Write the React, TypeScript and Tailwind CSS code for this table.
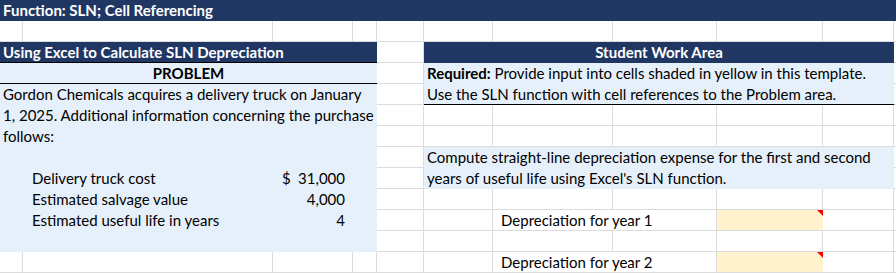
import React from "react";

const GRID = "#dcdcdc";

function BgGrid() {
  const cells: React.ReactNode[] = [];
  for (let r = 0; r < 13; r++) {
    for (let c = 0; c < 11; c++) {
      cells.push(<div key={`${r}-${c}`} className="border-r border-b border-[#dcdcdc] bg-white" />);
    }
  }
  return (
    <div className="[grid-area:1/1] grid grid-cols-[23px_250px_80px_24px_47px_69px_120px_104px_106px_71px_3px] grid-rows-[repeat(13,21px)]">
      {cells}
    </div>
  );
}

function RedMark() {
  return (
    <div className="absolute right-0 top-0 w-0 h-0 border-t-[6px] border-t-[#ff0000] border-l-[6px] border-l-transparent" />
  );
}

export default function App() {
  void GRID;
  return (
    <div className="w-[896px] h-[273px] overflow-hidden bg-white font-['Lato','Liberation_Sans',sans-serif] text-[15px] leading-[21px] text-black">
      <div className="grid">
        <BgGrid />
        <div className="[grid-area:1/1] grid grid-cols-[23px_250px_80px_24px_47px_69px_120px_104px_106px_71px_3px] grid-rows-[repeat(13,21px)]">
          {/* Row 1 title */}
          <div className="col-start-1 col-span-11 row-start-1 bg-[#203764] text-white font-bold px-[3px] whitespace-nowrap">
            Function: SLN; Cell Referencing
          </div>

          {/* Row 3 left header */}
          <div className="col-start-1 col-span-4 row-start-3 bg-[#203764] text-white font-bold px-[3px] border-b border-black whitespace-nowrap">
            Using Excel to Calculate SLN Depreciation
          </div>
          {/* Row 3 right header */}
          <div className="col-start-6 col-span-5 row-start-3 bg-[#203764] text-white font-bold text-center whitespace-nowrap">
            Student Work Area
          </div>

          {/* Left problem panel */}
          <div className="col-start-1 col-span-4 row-start-4 row-span-9 bg-[#e6f0fa] flex flex-col">
            <div className="h-[21px] font-bold text-center border-b border-black">PROBLEM</div>
            <div className="h-[63px] px-[3px]">
              Gordon Chemicals acquires a delivery truck on January 1, 2025. Additional information concerning the purchase follows:
            </div>
            <div className="h-[21px]" />
            <div className="grid grid-cols-[23px_250px_80px_24px] grid-rows-[repeat(3,21px)]">
              <div className="col-start-2 pl-[9px] whitespace-nowrap">Delivery truck cost</div>
              <div className="col-start-3 flex justify-between pl-[9px] pr-[8px]">
                <span>$</span>
                <span>31,000</span>
              </div>
              <div className="col-start-2 pl-[9px] whitespace-nowrap">Estimated salvage value</div>
              <div className="col-start-3 text-right pr-[8px]">4,000</div>
              <div className="col-start-2 pl-[9px] whitespace-nowrap">Estimated useful life in years</div>
              <div className="col-start-3 text-right pr-[8px]">4</div>
            </div>
          </div>

          {/* Right required panel */}
          <div className="col-start-6 col-span-5 row-start-4 row-span-2 bg-[#e6f0fa] border-b border-black px-[3px]">
            <div className="whitespace-nowrap">
              <span className="font-bold">Required:</span> Provide input into cells shaded in yellow in this template.
            </div>
            <div className="whitespace-nowrap">Use the SLN function with cell references to the Problem area.</div>
          </div>

          {/* Right compute panel */}
          <div className="col-start-6 col-span-5 row-start-8 row-span-2 bg-[#e6f0fa] px-[3px]">
            <div className="whitespace-nowrap">Compute straight-line depreciation expense for the first and second</div>
            <div className="whitespace-nowrap">years of useful life using Excel's SLN function.</div>
          </div>

          {/* Depreciation rows */}
          <div className="col-start-7 col-span-2 row-start-11 bg-white border-r border-b border-[#dcdcdc] pl-[8px] whitespace-nowrap">
            Depreciation for year 1
          </div>
          <div className="col-start-9 row-start-11 bg-[#fff2cc] border-b border-[#dcdcdc] relative">
            <RedMark />
          </div>
          <div className="col-start-7 col-span-2 row-start-13 bg-white border-r border-b border-[#dcdcdc] pl-[8px] whitespace-nowrap">
            Depreciation for year 2
          </div>
          <div className="col-start-9 row-start-13 bg-[#fff2cc] border-b border-[#dcdcdc] relative">
            <RedMark />
          </div>
        </div>
      </div>
    </div>
  );
}
